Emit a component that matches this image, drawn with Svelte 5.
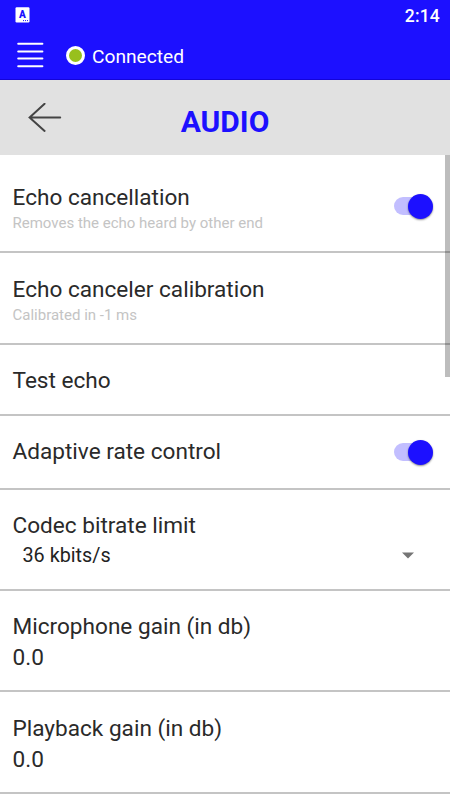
<script lang="ts">
  type Row = {
    label: string;
    height: number;
    top: number;
    hint?: string;
    on?: boolean;
    select?: string;
    value?: string;
  };

  let rows: Row[] = $state([
    { label: 'Echo cancellation', hint: 'Removes the echo heard by other end', on: true, height: 98, top: 29 },
    { label: 'Echo canceler calibration', hint: 'Calibrated in -1 ms', height: 92, top: 23 },
    { label: 'Test echo', height: 71, top: 22 },
    { label: 'Adaptive rate control', on: true, height: 74, top: 22 },
    { label: 'Codec bitrate limit', select: '36 kbits/s', height: 101, top: 22 },
    { label: 'Microphone gain (in db)', value: '0.0', height: 101, top: 22 },
    { label: 'Playback gain (in db)', value: '0.0', height: 102, top: 23 }
  ]);
</script>

<div class="screen">
  <header class="top">
    <div class="status">
      <svg width="15" height="16" viewBox="0 0 15 16">
        <rect x="0.5" y="0.3" width="14" height="15.2" rx="1.2" fill="#fff" />
        <text class="badge" x="7.5" y="11.2" text-anchor="middle">A</text>
        <path d="M8 13.6h1M10 13.6h1M12 13.6h1" stroke="#1c10ff" stroke-width="1" />
      </svg>
      <span class="time">2:14</span>
    </div>
    <div class="account">
      <button class="menu" aria-label="Menu">
        <svg width="27" height="26" viewBox="0 0 27 26">
          <path d="M1.2 1.8h24.2M1.2 9.4h24.2M1.2 16.5h24.2M1.2 24.2h24.2" stroke="#fff" stroke-width="2" stroke-linecap="round" />
        </svg>
      </button>
      <span class="dot"></span>
      <span class="state">Connected</span>
    </div>
  </header>

  <div class="titlebar">
    <button class="back" aria-label="Back">
      <svg width="34" height="30" viewBox="0 0 34 30">
        <path d="M16.6 0.8 1.6 14.4 16.6 27.9M1.6 14.4h30.6" fill="none" stroke="#444" stroke-width="2" stroke-linecap="round" />
      </svg>
    </button>
    <h1>AUDIO</h1>
  </div>

  <main>
    {#each rows as row}
      <section style="height: {row.height}px; padding-top: {row.top}px">
        <div class="text">
          <div class="label">{row.label}</div>
          {#if row.hint}<div class="hint">{row.hint}</div>{/if}
          {#if row.value}<div class="label value">{row.value}</div>{/if}
          {#if row.select}
            <div class="select">
              <span>{row.select}</span>
              <svg width="12" height="7" viewBox="0 0 12 7"><path d="M0 0.5h12L6 6.5z" fill="#757575" /></svg>
            </div>
          {/if}
        </div>
        {#if row.on !== undefined}
          <button
            class="switch"
            class:off={!row.on}
            class:hinted={row.hint}
            aria-label={row.label}
            onclick={() => (row.on = !row.on)}
          >
            <span class="thumb"></span>
          </button>
        {/if}
      </section>
    {/each}
    <div class="scrollbar"></div>
  </main>
</div>

<style>
  :global(body) {
    background: #fff;
  }

  .screen {
    width: 450px;
    height: 800px;
    overflow: hidden;
    font-family: Roboto, sans-serif;
    color: #2a2a2a;
    background: #fff;
  }

  button {
    padding: 0;
    border: 0;
    background: none;
  }

  svg {
    display: block;
  }

  .top {
    box-sizing: border-box;
    height: 80px;
    color: #fff;
    background: #1c10ff;
    border-bottom: 1px solid #1404d8;
  }

  .status {
    display: flex;
    justify-content: space-between;
    box-sizing: border-box;
    height: 42px;
    padding: 7px 10px 0 15px;
  }

  .badge {
    font-size: 10px;
    font-weight: 900;
    fill: #1c10ff;
  }

  .time {
    font-size: 17.5px;
    line-height: 18px;
    font-weight: 500;
    letter-spacing: 0.2px;
  }

  .account {
    display: flex;
    align-items: center;
    height: 26px;
    padding-left: 17px;
  }

  .dot {
    box-sizing: border-box;
    width: 19px;
    height: 19px;
    margin: 0 7px 0 22px;
    border: 3px solid #fff;
    border-radius: 50%;
    background: #98c01d;
  }

  .state {
    padding-top: 3px;
    font-size: 19.2px;
    line-height: 26px;
  }

  .titlebar {
    display: grid;
    grid-template-columns: 62px 1fr 62px;
    align-items: center;
    height: 75px;
    background: #e1e1e1;
  }

  .back {
    margin-left: 28px;
  }

  h1 {
    margin: 8px 0 0;
    font-size: 30px;
    line-height: 36px;
    font-weight: 700;
    text-align: center;
    color: #1c10ff;
  }

  main {
    position: relative;
    height: 645px;
  }

  section {
    display: flex;
    box-sizing: border-box;
    padding-left: 12.5px;
    padding-right: 15px;
    border-bottom: 2px solid #c4c4c4;
  }

  .text {
    flex: 1;
  }

  .label {
    font-size: 22.6px;
    line-height: 28px;
    white-space: nowrap;
  }

  .value {
    margin-top: 3px;
  }

  .hint {
    margin-top: 2px;
    font-size: 15px;
    line-height: 18px;
    color: #c4c4c4;
  }

  .select {
    display: flex;
    align-items: center;
    justify-content: space-between;
    margin-top: 4px;
    padding: 0 21.5px 0 10px;
    font-size: 19.8px;
    line-height: 24px;
    color: #222;
  }

  .select svg {
    margin-top: -2px;
  }

  .switch {
    display: flex;
    align-items: center;
    justify-content: flex-end;
    width: 41px;
    height: 18px;
    margin-top: 5px;
    background: linear-gradient(#c2beff, #c2beff) left / 30px 18px no-repeat;
    border-radius: 9px;
  }

  .switch.hinted {
    margin-top: 13px;
  }

  .switch.off {
    justify-content: flex-start;
  }

  .thumb {
    flex: none;
    width: 25px;
    height: 25px;
    margin-right: 2px;
    border-radius: 50%;
    background: #1c10ff;
    box-shadow: 0 1px 2px rgba(0, 0, 0, 0.45);
  }

  .scrollbar {
    position: absolute;
    top: 0;
    right: 0;
    width: 5px;
    height: 222px;
    background: rgba(0, 0, 0, 0.26);
  }
</style>
